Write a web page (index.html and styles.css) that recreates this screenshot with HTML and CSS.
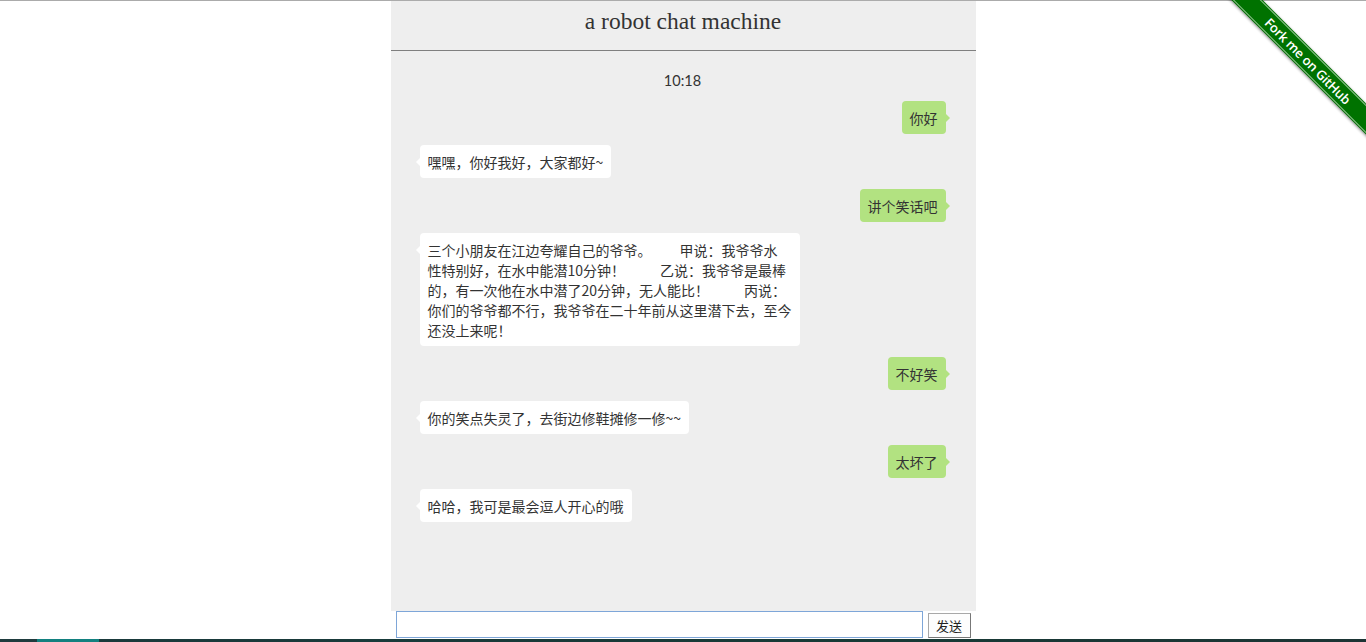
FILE: index.html
```html
<!DOCTYPE html>
<html lang="zh-CN">
<head>
<meta charset="utf-8">
<title>a robot chat machine</title>
<link rel="stylesheet" href="styles.css">
</head>
<body>
<div class="page">
  <div class="chat">
    <header class="chat-header">a robot chat machine</header>
    <main class="chat-body">
      <div class="time">10:18</div>
      <div class="row row-me"><div class="bubble bubble-me">你好</div></div>
      <div class="row row-bot"><div class="bubble bubble-bot">嘿嘿，你好我好，大家都好~</div></div>
      <div class="row row-me"><div class="bubble bubble-me">讲个笑话吧</div></div>
      <div class="row row-bot"><div class="bubble bubble-bot">三个小朋友在江边夸耀自己的爷爷。　　&ensp;甲说：我爷爷水<br>性特别好，在水中能潜10分钟！　　&ensp;乙说：我爷爷是最棒<br>的，有一次他在水中潜了20分钟，无人能比！　　&ensp;丙说：<br>你们的爷爷都不行，我爷爷在二十年前从这里潜下去，至今<br>还没上来呢！</div></div>
      <div class="row row-me"><div class="bubble bubble-me">不好笑</div></div>
      <div class="row row-bot"><div class="bubble bubble-bot">你的笑点失灵了，去街边修鞋摊修一修~~</div></div>
      <div class="row row-me"><div class="bubble bubble-me">太坏了</div></div>
      <div class="row row-bot"><div class="bubble bubble-bot">哈哈，我可是最会逗人开心的哦</div></div>
    </main>
  </div>
  <div class="input-row">
    <input class="msg-input" type="text" autofocus>
    <button class="send-btn" type="button">发送</button>
  </div>
  <div class="taskbar">
    <span class="tb-seg tb-a"></span>
    <span class="tb-seg tb-b"></span>
    <span class="tb-seg tb-c"></span>
  </div>
</div>
<div class="ribbon-wrap">
  <a class="ribbon" href="#">Fork me on GitHub</a>
</div>
</body>
</html>
```
FILE: styles.css
```css
* { box-sizing: border-box; }
html, body { margin: 0; padding: 0; height: 642px; overflow: hidden; }
body {
  background: #fff;
  border-top: 1px solid #ababab;
  font-family: "Noto Sans CJK SC", "Noto Sans", sans-serif;
  color: #333;
}
.page { display: flex; flex-direction: column; align-items: center; }
.chat { width: 585px; background: #eeeeee; display: flex; flex-direction: column; }
.chat-header {
  height: 50px;
  border-bottom: 1px solid #7f7f7f;
  text-align: center;
  font-family: "Liberation Serif", "DejaVu Serif", serif;
  font-size: 23.5px;
  line-height: 40px;
  color: #333;
}
.chat-body {
  height: 560px;
  display: flex;
  flex-direction: column;
  padding: 20px 30px 0 29px;
}
.time {
  text-align: center;
  font-family: Lato, "Noto Sans", sans-serif;
  font-size: 14.5px;
  line-height: 20px;
  color: #333;
  margin-bottom: 10px;
}
.row { display: flex; margin-bottom: 11px; }
.row-me { justify-content: flex-end; }
.row-bot { justify-content: flex-start; }
.bubble {
  position: relative;
  font-size: 14px;
  line-height: 20px;
  padding: 7px 8px 6px;
  border-radius: 4px;
  max-width: 382px;
  color: #333;
  white-space: nowrap;
}
.bubble-me { background: #b2e281; }
.bubble-bot { background: #ffffff; }
.bubble::after {
  content: "";
  position: absolute;
  top: 13px;
  width: 0; height: 0;
  border-top: 4px solid transparent;
  border-bottom: 4px solid transparent;
}
.bubble-me::after { right: -4px; border-left: 4px solid #b2e281; }
.bubble-bot::after { left: -4px; border-right: 4px solid #ffffff; }
.input-row {
  width: 585px;
  height: 28px;
  display: flex;
  align-items: flex-start;
  padding-left: 5px;
  gap: 5px;
}
.msg-input {
  width: 527px;
  height: 27px;
  margin: 0;
  border: 1px solid #7ea6d8;
  outline: none;
  padding: 0 2px;
  font-size: 14px;
  background: #fff;
}
.send-btn {
  margin-top: 2px;
  width: 43px;
  height: 25px;
  padding: 0;
  font-family: "Noto Sans CJK SC", sans-serif;
  font-size: 13px;
  color: #222;
  background: #fdfdfd;
  border: 1px solid #a8a8a8;
  border-right-color: #777;
  border-bottom-color: #777;
}
.taskbar { width: 1366px; height: 3px; display: flex; background: #1c3838; }
.tb-seg { display: block; height: 3px; }
.tb-a { width: 37px; background: #1f3b3e; }
.tb-b { width: 62px; background: #138180; }
.tb-c { flex: 1; background: linear-gradient(90deg, #1a3a3c, #173a36 60%, #1c3434); }
.ribbon-wrap {
  position: absolute;
  top: 0;
  right: 0;
  width: 150px;
  height: 150px;
  overflow: hidden;
}
.ribbon {
  position: absolute;
  left: -18px;
  top: 50px;
  width: 220px;
  height: 22px;
  transform: rotate(45deg);
  background: #007200;
  color: #fff;
  text-decoration: none;
  text-align: center;
  font-family: "Open Sans", "Noto Sans", sans-serif;
  font-weight: 600;
  font-size: 13px;
  line-height: 22px;
  letter-spacing: -0.2px;
  box-shadow: 0 1px 3px rgba(0,0,0,0.45);
}
.ribbon::before, .ribbon::after {
  content: "";
  position: absolute;
  left: 0; right: 0;
  height: 1px;
  background: rgba(255,255,255,0.55);
}
.ribbon::before { top: 1px; }
.ribbon::after { bottom: 1px; }
```
